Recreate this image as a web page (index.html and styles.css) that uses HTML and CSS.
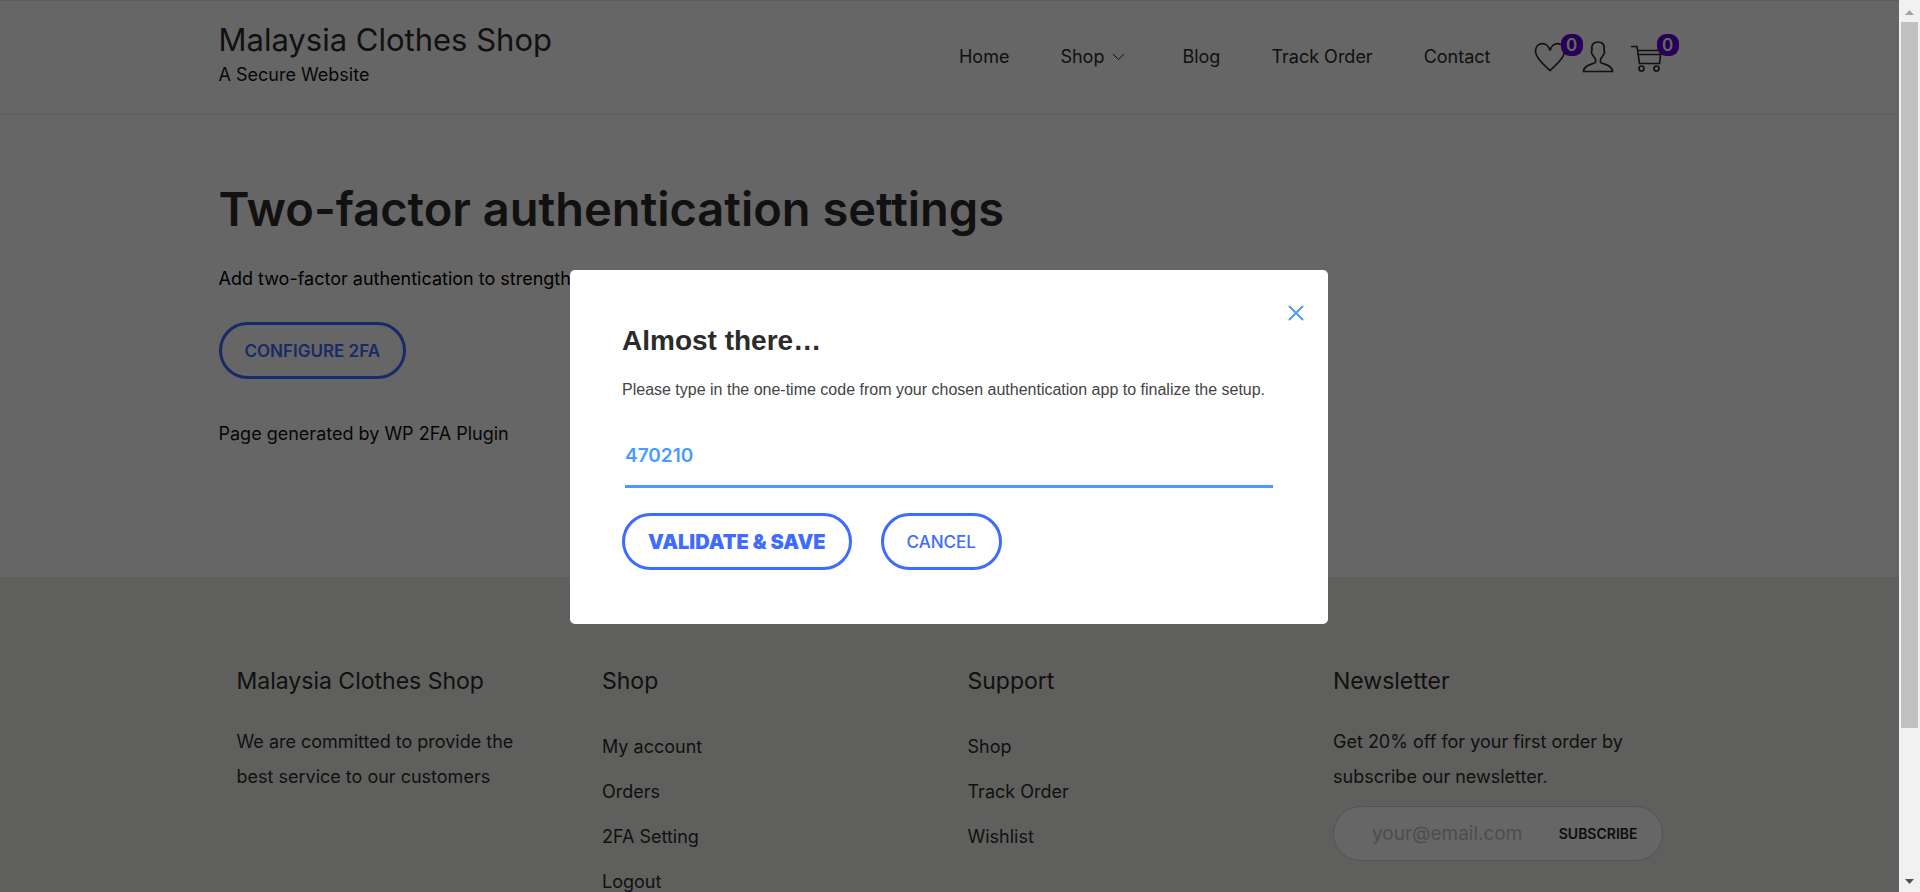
FILE: index.html
```html
<!DOCTYPE html>
<html lang="en">
<head>
<meta charset="utf-8">
<title>Two-factor authentication settings</title>
<link rel="stylesheet" href="styles.css">
</head>
<body>
<div class="window">
  <div class="page">
    <header class="header">
      <div class="container header-row">
        <div class="brand">
          <a class="brand-name" href="#">Malaysia Clothes Shop</a>
          <p class="brand-tag">A Secure Website</p>
        </div>
        <nav class="nav">
          <a href="#">Home</a>
          <a class="has-menu" href="#">Shop
            <svg width="13" height="8" viewBox="0 0 13 8" fill="none" stroke="currentColor"><path d="M1 1l5.500 5.500L12 1"/></svg>
          </a>
          <a href="#">Blog</a>
          <a href="#">Track Order</a>
          <a href="#">Contact</a>
        </nav>
        <div class="tools">
          <a class="tool" href="#" aria-label="Wishlist">
            <svg width="32" height="32" viewBox="0 0 32 32" fill="none" stroke="currentColor" stroke-width="1.700"><path d="M16 29.500C13 26 2 19 1.500 10.500C1.500 1 13.500-.5 16 9.500C18.500-.5 30.500 1 30.500 10.500C30 19 19 26 16 29.500z"/></svg>
            <span class="badge">0</span>
          </a>
          <a class="tool" href="#" aria-label="Account">
            <svg width="32" height="32" viewBox="0 0 32 32" fill="none" stroke="currentColor" stroke-width="1.700"><path d="M13.500 18.500c-.5-1.500-2-2.500-3-5c-1-.5-1.500-3-.5-4C9 4 11 1 16 1s7 3 6 8.500c1 1 .5 3.500-.5 4c-1 2.500-2.500 3.500-3 5v3c2 2 11.500 1.500 12 9H1.500C2 23 11.500 23.500 13.500 21.500z"/></svg>
          </a>
          <a class="tool tool-cart" href="#" aria-label="Cart">
            <svg width="32" height="32" viewBox="0 0 32 32" fill="none" stroke="currentColor" stroke-width="1.700"><path d="M1 5.500h6l2.500 17h20L31 9.500H8M8.500 13.500H30"/><circle cx="11.500" cy="27.500" r="2.500"/><circle cx="26.500" cy="27.500" r="2.500"/></svg>
            <span class="badge">0</span>
          </a>
        </div>
      </div>
    </header>

    <main class="container main">
      <h1 class="title">Two-factor authentication settings</h1>
      <p class="lead">Add two-factor authentication to strengthen the security of your account.</p>
      <button class="pill pill-medium" type="button">CONFIGURE 2FA</button>
      <p class="credit">Page generated by WP 2FA Plugin</p>
    </main>

    <footer class="footer">
      <div class="container footer-grid">
        <section class="about">
          <h2>Malaysia Clothes Shop</h2>
          <p>We are committed to provide the best service to our customers</p>
        </section>
        <section>
          <h2>Shop</h2>
          <ul>
            <li><a href="#">My account</a></li>
            <li><a href="#">Orders</a></li>
            <li><a href="#">2FA Setting</a></li>
            <li><a href="#">Logout</a></li>
          </ul>
        </section>
        <section>
          <h2>Support</h2>
          <ul>
            <li><a href="#">Shop</a></li>
            <li><a href="#">Track Order</a></li>
            <li><a href="#">Wishlist</a></li>
          </ul>
        </section>
        <section>
          <h2>Newsletter</h2>
          <p>Get 20% off for your first order by subscribe our newsletter.</p>
          <form class="subscribe">
            <input type="email" placeholder="your@email.com" aria-label="Email address">
            <button type="button">SUBSCRIBE</button>
          </form>
        </section>
      </div>
    </footer>

    <div class="overlay">
      <div class="modal" role="dialog" aria-labelledby="modal-title">
        <button class="close" type="button" aria-label="Close">
          <svg width="16" height="16" viewBox="0 0 16 16" fill="none" stroke="currentColor" stroke-width="2" stroke-linecap="round"><path d="M1.500 1.500l13 13M14.500 1.500l-13 13"/></svg>
        </button>
        <h2 class="modal-title" id="modal-title">Almost there…</h2>
        <label class="modal-text" for="code">Please type in the one-time code from your chosen authentication app to finalize the setup.</label>
        <input class="code" id="code" type="text" value="470210">
        <div class="actions">
          <button class="pill pill-strong" type="button">VALIDATE &amp; SAVE</button>
          <button class="pill" type="button">CANCEL</button>
        </div>
      </div>
    </div>
  </div>

  <div class="scrollbar" aria-hidden="true">
    <svg class="arrow-up" width="9" height="5" viewBox="0 0 9 5"><path d="M0 5L4.500 0L9 5z" fill="currentColor"/></svg>
    <div class="track"><div class="thumb"></div></div>
    <svg width="9" height="5" viewBox="0 0 9 5"><path d="M0 0L4.500 5L9 0z" fill="currentColor"/></svg>
  </div>
</div>
</body>
</html>
```
FILE: styles.css
```css
* { box-sizing: border-box; }

body {
  margin: 0;
  font-family: Inter, "Open Sans", sans-serif;
  font-size: 18px;
  font-weight: 400;
  color: #2b2b2b;
}

h1, h2, p, ul { margin: 0; padding: 0; }
a { color: inherit; text-decoration: none; }
button, input { font-family: inherit; }
button { cursor: pointer; }
svg { display: block; }

.window {
  display: grid;
  grid-template-columns: 1fr 21px;
  height: 100vh;
  overflow: hidden;
}

.page {
  position: relative;
  overflow: hidden;
  background: #fff;
}

.container {
  max-width: 1462px;
  margin: 0 auto;
}

.header {
  border-top: 1px solid #e6e4f0;
  border-bottom: 1px solid #e6e6e8;
}

.header-row {
  display: flex;
  align-items: center;
  height: 113px;
  padding-bottom: 2px;
}

.brand { margin-right: auto; padding-bottom: 5px; }
.brand-name { display: block; font-size: 31px; line-height: 40px; }
.brand-tag { line-height: 29px; color: #111; }

.nav { display: flex; gap: 51px; line-height: 24px; }
.has-menu { display: flex; align-items: center; gap: 8px; margin-right: 6px; }

.tools { display: flex; margin-left: 43px; padding-right: 19px; }
.tool { position: relative; margin-right: 16px; }
.tool-cart { margin: 0; }

.badge {
  position: absolute;
  top: -7px;
  left: 27px;
  width: 22px;
  height: 22px;
  border-radius: 9px;
  background: #6200d9;
  color: #fff;
  font-size: 17px;
  font-weight: 600;
  line-height: 22px;
  text-align: center;
}

.main { height: 462px; padding-top: 66px; }
.title { font-size: 47px; font-weight: 600; line-height: 56px; }
.lead { margin: 28px 0 29px; line-height: 28px; color: #000; }
.credit { margin-top: 41px; line-height: 28px; color: #111; }

.pill {
  height: 57px;
  padding: 0 23px;
  border: 3px solid #3f6bff;
  border-radius: 29px;
  background: transparent;
  color: #3f6bff;
  font-size: 17px;
  font-weight: 500;
}
.pill-medium { font-weight: 600; }
.pill-strong { font-size: 20px; font-weight: 900; }

.footer { background: #eeeee9; }
.footer-grid {
  display: grid;
  grid-template-columns: repeat(4, minmax(0, 1fr));
  padding: 86px 0 60px;
}
.footer section { padding: 0 18px; }
.footer .about { padding-right: 48px; }
.footer h2 { font-size: 23px; font-weight: 400; line-height: 36px; }
.footer p { margin-top: 25px; line-height: 35px; }
.footer ul { margin-top: 25px; list-style: none; line-height: 45px; }

.subscribe {
  display: flex;
  align-items: center;
  height: 55px;
  margin-top: 12px;
  padding: 0 24px 0 38px;
  border: 1px solid #cfcfcf;
  border-radius: 28px;
  background: #fff;
}
.subscribe input {
  flex: 1;
  min-width: 0;
  padding: 0;
  border: 0;
  outline: 0;
  background: none;
  font-size: 19px;
}
.subscribe input::placeholder { color: #c0c0c0; }
.subscribe button {
  padding: 0;
  border: 0;
  background: none;
  color: #222;
  font-size: 14px;
  font-weight: 600;
}

.overlay {
  position: absolute;
  inset: 0;
  display: grid;
  place-items: center;
  padding: 2px 1px 0 0;
  background: rgba(0, 0, 0, 0.6);
}

.modal {
  position: relative;
  width: 758px;
  padding: 53px 52px 54px;
  border-radius: 5px;
  background: #fff;
  font-family: "Liberation Sans", Arial, sans-serif;
}
.close {
  position: absolute;
  top: 35px;
  right: 24px;
  padding: 0;
  border: 0;
  background: none;
  color: #4a9bff;
}
.modal-title { font-size: 28px; font-weight: 700; line-height: 36px; }
.modal-text { display: block; margin-top: 18px; font-size: 16px; line-height: 26px; color: #444; }
.code {
  display: block;
  width: calc(100% - 6px);
  height: 62px;
  margin: 23px 3px 25px;
  padding: 0;
  border: 0;
  border-bottom: 3px solid #4a9bff;
  outline: 0;
  color: #4a9bff;
  font-family: Inter, sans-serif;
  font-size: 19px;
  font-weight: 600;
}
.actions { display: flex; gap: 29px; font-family: Inter, sans-serif; }

.scrollbar {
  display: flex;
  flex-direction: column;
  align-items: center;
  padding: 10px 0 8px;
  background: #f1f1f1;
  color: #505050;
}
.arrow-up { color: #a3a3a3; }
.track { flex: 1; width: 17px; margin: 7px 0; }
.thumb { height: 83%; background: #c1c1c1; }
```
